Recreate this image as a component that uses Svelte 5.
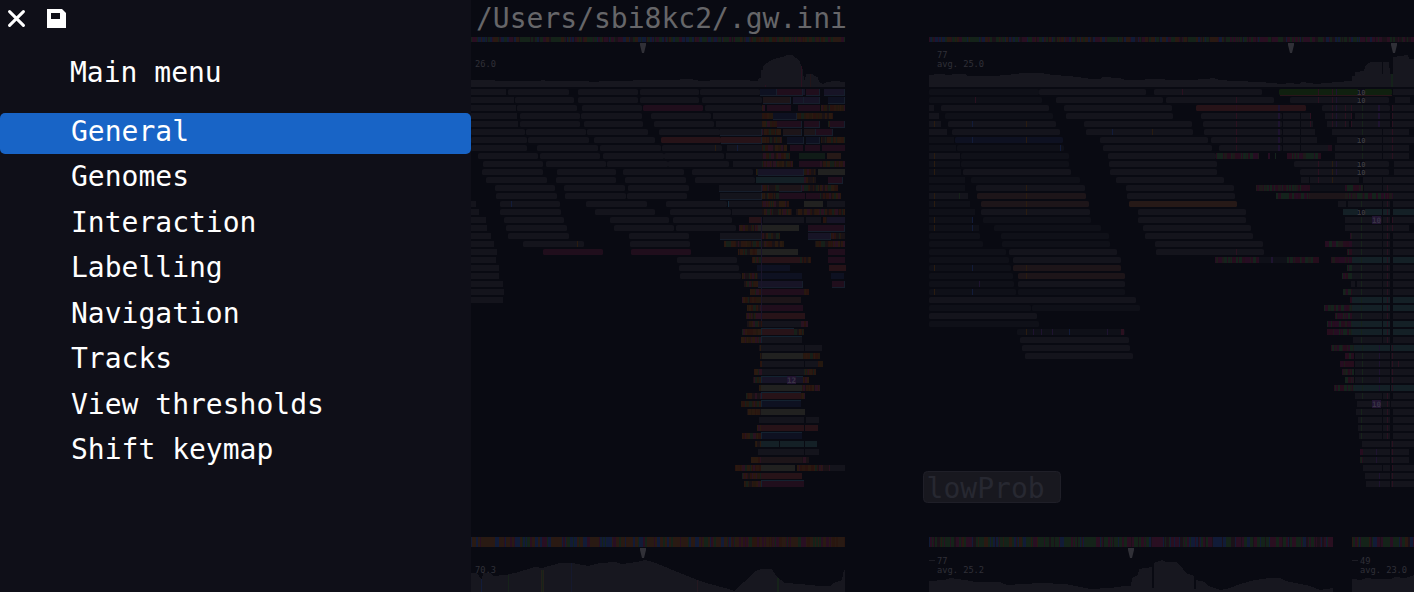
<script>
  const menu = ['General', 'Genomes', 'Interaction', 'Labelling', 'Navigation', 'Tracks', 'View thresholds', 'Shift keymap'];
  let selected = $state('General');

  const top = 89;
  const pitch = 8;

  // Segment kinds: g read, d faint read, s mismatch stripes, q red/green stripes,
  // m magenta, r red, b blue, p purple, o olive, n brown, t teal, f green, u orange
  const colour = {
    g: '#14141c', d: '#0f1018', m: '#200e1c', r: '#271318', b: '#0e1121', p: '#171426',
    o: '#212120', n: '#1d1519', t: '#142026', f: '#10200f', u: '#261917', w: '#101b17'
  };

  // A trailing "_" underlines the segment, a trailing "^" outlines its top.
  const left = `
g471-506 g508-569 g578-638 g640-699 g700-760 b760-777_ m777-803_ p803-805 m806-820_ p824-845_
g471-514 g515-574 g578-638 g640-699 g702-762 n763-791_ p793-804_ p804-820_ b828-845_
g471-516 g517-577 g582-642 m643-703 g705-762 s762-765 m767-791 m798-820 s821-845
g471-517 g520-580 g581-642 g651-711 g713-762 s762-773 b773-797_ s797-833
g471-518 g520-580 g584-643 g654-714 g716-762 s762-777 m777-802_ m804-820_ s828-830 m830-845_
g471-525 g526-586 g587-648 g659-720 g720-762_ s762-781 n783-802_ n804-816_ m816-833_
g471-527 g528-589 g594-655 r661-721 r721-762_ s762-782 b787-804_ b806-820_ s821-845
g471-527 g537-598 g600-661 g662-722 g727-762 s762-787 m790-803 m805-820 m822-845
g478-538 g540-600 g603-664 g664-724 g726-762 s762-790 w799-825 u827-841
g483-543 g546-606 g607-668 g668-729 g733-762 s762-793 m799-820 s820-845
g482-543 g557-616 g623-684 g692-753 s756-758 p758-804_ s804-816 o818-845
g486-547 g556-616 g625-686 g695-755 t756-804 s804-816 m828-843_
g495-555 g564-625 g628-689 g719-762_ s762-779 n779-802_ s802-838
g496-557 g565-626 g627-687 g720-762_ s762-779 m779-805 m806-820 s820-841
g471-476 g500-560 g586-647 g666-727 g728-762 s762-789 o804-823 g827-845
g471-479 g500-561 g595-655 g670-731 g732-762 s762-792 s796-845
g471-486 g504-564 g610-669 g673-732 r749-762 g763-804 g806-821 s823-827 p827-845
g471-487 g506-567 g614-674 g676-736 s739-758 o758-799 m808-845_
g471-491 g508-569 g629-689 g720-762_ s762-780 p808-831_ s831-845
g471-494 g523-584 g630-690 s724-784 s815-845
g471-497 m543-603 m631-691 s738-757 o757-798 m828-845
g471-496 g677-737 s752-762 r762-800 s800-811 m828-845
g471-499 g679-739 b757-790 r829-846
g471-499 g680-741 s742-758 b758-802 b831-844
g471-503 s744-758 p758-803_ m832-845_
g471-504 s750-762 m762-804 s804-809
g471-503 s742-762 n762-801
s747-762 m762-803
s746-762 r762-805
s747-762 g762-801 s801-808
s742-761 r761-794^ s794-804
s741-761 g761-802^
s759-761 g761-804 g805-822
s760-762 o762-803 s803-820
s760-762 g762-804 g805-818 s818-823
s754-762 g762-804 s804-816
s753-761 p761-803^ s803-809
s759-761 o761-802 s802-820
s746-761 r761-801^ s801-805
s741-761 b761-801^
s747-761 o761-805
g759-804 g806-819
s757-761 r761-804 r805-818
s742-761 b761-802^
s755-761 t761-779 t780-804 t805-817
g758-804 g805-819
s751-761 n761-802 s802-809
s735-761 o761-795 s797-830 g830-845
s742-761 r761-802
s744-761 m761-804^`;

  const right = `
d929-1039 g1039-1146 g1154-1262 f1279-1392 g1393-1414
d929-1042 g1056-1163 g1166-1274 g1290-1389 g1395-1410
g929-934 g941-1049 g1064-1172 r1196-1306 g1322-1390 g1393-1414
g929-939 d945-1053 g1066-1173 g1201-1282 g1283-1300 g1301-1311 g1325-1351 g1355-1390 g1393-1414
g929-941 g948-1056 g1084-1192 g1203-1282 g1283-1300 g1301-1313 g1327-1349 g1351-1390 g1393-1414
g929-947 g952-1060 g1086-1193 g1204-1282 g1283-1300 g1301-1315 g1332-1382 g1383-1409
d929-954 b955-1063 g1100-1208 g1211-1282 g1283-1300 g1301-1317 g1337-1382 g1383-1414
d929-956 d957-1064 g1103-1212 g1219-1282 g1283-1300 g1301-1330 m1328-1332 g1335-1382 g1383-1409
g929-960 d961-1069 g1108-1216 q1216-1259 q1268-1270 q1275-1276 q1287-1321 g1335-1382 g1383-1409
d929-960 d961-1069 g1109-1217 g1294-1389 g1394-1414
d929-961 g963-1071 g1110-1217 g1300-1389 g1394-1414
d929-965 d971-1080 g1116-1224 g1301-1309 g1310-1359 g1363-1382 g1383-1414
d929-965 g976-1085 g1126-1234 q1256-1310 d1310-1345 q1345-1363 g1364-1382 g1383-1414
g929-968 n977-1086 g1127-1235 q1276-1310 n1310-1345 q1345-1393 g1393-1414
d929-970 n981-1089 u1129-1237 g1338-1346 g1348-1382 g1383-1390 g1393-1414
d929-975 g981-1090 g1138-1246 t1343-1382 t1383-1390 t1393-1414
d929-972 d983-1091 g1138-1246 g1345-1382 g1383-1390 g1393-1414
d929-979 d994-1101 g1143-1251 g1345-1382 g1383-1409
d929-980 d1001-1109 g1145-1253 q1350-1352 g1352-1382 g1383-1390 g1393-1414
d929-983 d1002-1110 g1155-1263 q1325-1352 g1352-1382 g1383-1390 g1393-1414
d929-1006 g1009-1117 g1156-1264 q1347-1352 g1352-1382 g1383-1390 g1393-1414
d929-1009 g1013-1121 q1215-1259 d1259-1287 q1287-1319 q1331-1352 t1352-1382 t1383-1390 t1393-1414
d929-1011 n1013-1121 q1347-1352 g1352-1382 g1383-1390 g1393-1414
d929-1013 n1018-1125 q1342-1352 g1352-1382 g1383-1390 g1393-1414
d929-1014 g1018-1125 g1351-1355 g1357-1382 g1383-1390 g1393-1414
d929-1016 d1018-1125 q1343-1352 g1352-1382 g1383-1390 g1393-1414
g929-1136 q1350-1352 t1352-1382 t1383-1390 t1393-1414
d929-1031 d1032-1140 q1324-1352 t1352-1382 t1383-1390 t1393-1414
g929-1037 q1335-1352 g1352-1382 g1383-1390 g1393-1414
d929-1039 q1327-1352 t1352-1382 t1383-1390 t1393-1414
d1017-1125 q1327-1352 t1352-1382 t1383-1390 t1393-1414
g1020-1129 g1353-1382 g1383-1390 g1393-1414
g1022-1130 q1331-1354 t1354-1390 t1391-1414
g1025-1133 q1345-1354 g1355-1390 g1391-1414
q1340-1354 g1355-1390 g1391-1414
q1342-1354 g1355-1390 g1391-1414
q1345-1354 g1355-1390 g1391-1414
q1334-1354 t1354-1390 t1391-1414
g1355-1382 g1383-1390 g1393-1414
g1357-1390 g1391-1414
g1356-1382 g1383-1390 g1393-1414
g1358-1382 g1383-1390 g1393-1414
g1358-1382 g1383-1390 g1393-1414
g1359-1382 g1383-1390 g1393-1414
g1362-1390 g1391-1414
q1360-1363 g1363-1390 g1391-1409
q1360-1363 g1363-1390 g1391-1409
g1363-1382 g1383-1390 g1393-1414
g1365-1390 g1391-1414
g1366-1390 g1391-1414`;

  const parse = (text) =>
    text.trim().split('\n').flatMap((line, row) =>
      line.split(' ').map((token) => {
        const [, kind, a, b, edge] = token.match(/^(\w)(\d+)-(\d+)([_^]?)$/);
        return { kind, x: +a, w: b - a, y: top + row * pitch, edge };
      })
    );

  const segments = [...parse(left), ...parse(right)];
  const reads = segments.filter((s) => colour[s.kind]);

  function random(seed) {
    let v = seed;
    return () => ((v = (v * 1664525 + 1013904223) >>> 0) / 4294967296);
  }

  const warm = ['#29130f', '#24180f', '#2a1a10', '#161f19', '#2a1220', '#191216', '#2a1710'];
  const mixed = ['#260d22', '#260d1e', '#14231c', '#14231c', '#1d1a1a', '#260d1c'];
  const bases = ['#290f22', '#142319', '#111b37', '#2a1912', '#1b1119', '#142319'];
  const lower = ['#291a13', '#111b37', '#291a13', '#290f22', '#142319', '#2a1913'];
  const dusk = ['#290f22', '#142319', '#2a0f20', '#142319', '#111b37', '#1b1119'];
  const earth = ['#29160f', '#291a13', '#290f22', '#142319', '#291a13'];

  function stripes(x, w, y, h, palette, seed) {
    const next = random(seed);
    const out = [];
    for (let p = x; p < x + w; ) {
      const step = Math.min(next() < 0.6 ? 1 : 2 + Math.floor(next() * 2), x + w - p);
      out.push({ x: p, w: step, y, h, fill: palette[Math.floor(next() * palette.length)] });
      p += step;
    }
    return out;
  }

  const bands = [
    ...segments.filter((s) => s.kind === 's').flatMap((s) => stripes(s.x, s.w, s.y, 6, warm, s.x * 31 + s.y)),
    ...segments.filter((s) => s.kind === 'q').flatMap((s) => stripes(s.x, s.w, s.y, 6, mixed, s.x * 17 + s.y)),
    ...stripes(471, 280, 37, 5, bases, 7),
    ...stripes(751, 94, 37, 5, earth, 8),
    ...stripes(929, 300, 37, 5, bases, 9),
    ...stripes(1229, 185, 37, 5, dusk, 10),
    ...stripes(471, 260, 537, 10, lower, 11),
    ...stripes(731, 114, 537, 10, earth, 12),
    ...stripes(929, 140, 537, 10, bases, 13),
    ...stripes(1069, 264, 537, 10, dusk, 14),
    ...stripes(1352, 62, 537, 10, bases, 15)
  ];

  const column = (x, from, to, fill, w = 1) =>
    Array.from({ length: to - from + 1 }, (_, i) => ({ x, w, y: top + (from + i) * pitch, h: 6, fill }));

  const violet = '#1e1330';
  const wine = '#2b1120';
  const moss = '#16231a';
  const amber = '#2a1c10';
  const navy = '#121c3a';
  const ticks = [
    ...[4, 8, 9, 10, 13, 14, 16, 17, 22, 25].flatMap((r) => column(934, r, r, amber)),
    ...[4, 6, 12, 13, 14, 15, 22, 23, 30].flatMap((r) => column(1026, r, r, amber)),
    ...[4, 6, 16, 17, 22, 25].flatMap((r) => column(972, r, r, navy)),
    ...column(975, 1, 1, wine), ...column(959, 13, 13, moss), ...column(1060, 7, 7, navy),
    ...column(511, 14, 14, navy), ...column(577, 19, 19, amber), ...column(715, 7, 7, amber),
    ...column(737, 7, 7, navy), ...column(728, 14, 14, '#172b3b'),
    ...column(1182, 0, 0, wine), ...column(1236, 1, 7, wine), ...column(1278, 2, 7, violet, 2),
    ...column(1310, 3, 4, wine), ...column(1318, 0, 1, wine), ...column(1318, 9, 11, wine),
    ...column(1332, 0, 4, wine), ...column(1332, 9, 11, amber), ...column(1336, 0, 4, violet),
    ...column(1336, 9, 10, violet), ...column(1345, 2, 4, wine), ...column(1351, 2, 4, wine),
    ...column(1362, 2, 8, moss), ...column(1378, 2, 4, violet, 2), ...column(1392, 2, 8, wine),
    ...column(1361, 12, 31, moss), ...column(1362, 32, 38, moss), ...column(1361, 40, 43, moss),
    ...column(1387, 12, 31, wine), ...column(1392, 16, 17, wine), ...column(1392, 32, 37, wine),
    ...column(1387, 38, 43, wine), ...column(1392, 44, 49, wine), ...column(1379, 32, 37, violet),
    ...column(1379, 48, 49, violet), ...column(1376, 45, 46, violet), ...column(1398, 34, 34, wine),
    ...column(1033, 30, 30, violet), ...column(1041, 30, 30, violet), ...column(1052, 30, 30, violet),
    ...column(1069, 30, 30, navy), ...column(1107, 30, 30, violet), ...column(1121, 30, 30, wine, 3),
    ...column(1236, 20, 20, wine), ...column(1271, 21, 21, violet, 2), ...column(1112, 5, 5, navy),
    ...column(1152, 5, 5, amber), ...column(979, 24, 24, violet)
  ];

  const coverage = [
    '471,87 471,80 494,80 495,81 540,81 541,80 544,80 545,81 588,81 589,82 608,81 625,81 640,80 670,80 690,79 700,81 720,80 742,80 758,81 759,78 761,78 761,70 763,70 763,66 767,63 772,60 777,58 783,57 787,55 792,55 796,58 800,61 801,66 802,66 803,72 804,80 805,80 806,74 812,74 814,76 818,77 819,82 823,84 827,82 835,81 845,82 845,87',
    '929,87 929,75 938,74 951,75 953,74 965,74 968,76 996,76 1004,75 1018,74 1020,73 1041,73 1053,75 1068,76 1077,77 1091,79 1100,79 1102,77 1119,78 1125,80 1140,80 1150,79 1180,80 1190,80 1205,79 1214,78 1219,80 1235,81 1260,82 1282,84 1289,83 1299,84 1302,82 1316,84 1337,82 1350,81 1352,81 1352,76 1355,76 1355,72 1364,71 1366,65 1371,62 1382,62 1382,74 1383,74 1383,62 1389,62 1390,74 1391,74 1391,83 1393,83 1393,57 1400,56 1408,55 1409,59 1414,59 1414,87',
    '471,592 471,573 477,573 481,579 482,579 483,573 491,573 493,576 505,575 515,573 525,570 535,567 542,568 553,565 560,563 572,563 583,565 588,566 600,563 615,562 622,564 637,562 645,560 653,562 663,566 680,573 690,577 700,581 710,584 725,588 735,591 740,585 748,579 755,571 762,569 772,569 776,576 785,583 800,584 820,586 830,586 833,583 842,580 844,570 845,570 845,592',
    '929,592 929,581 945,580 950,578 965,580 975,582 1000,582 1007,585 1040,583 1065,584 1090,589 1110,588 1125,586 1131,586 1132,578 1138,575 1139,569 1152,567 1152,588 1154,588 1154,563 1162,560 1166,562 1176,562 1180,565 1186,573 1194,576 1194,589 1196,589 1196,580 1205,582 1208,586 1220,590 1230,588 1240,584 1255,580 1270,578 1280,578 1286,581 1300,584 1310,586 1320,590 1333,588 1333,592',
    '1352,592 1352,579 1361,580 1366,578 1375,579 1391,579 1395,577 1405,578 1414,575 1414,592'
  ];

  const accents = [
    { x: 801, y: 66, w: 1, h: 21, fill: '#2b1120' }, { x: 810, y: 74, w: 1, h: 13, fill: '#221519' },
    { x: 765, y: 85, w: 1, h: 2, fill: wine }, { x: 1391, y: 74, w: 2, h: 13, fill: '#14221a' },
    { x: 481, y: 579, w: 1, h: 13, fill: navy }, { x: 508, y: 575, w: 1, h: 17, fill: moss },
    { x: 541, y: 570, w: 3, h: 22, fill: '#24201a' }, { x: 542, y: 570, w: 1, h: 22, fill: moss },
    { x: 571, y: 563, w: 1, h: 29, fill: '#15192e' }, { x: 697, y: 580, w: 1, h: 12, fill: '#241820' },
    { x: 777, y: 578, w: 2, h: 14, fill: moss }, { x: 761, y: 217, w: 1, h: 104, fill: '#1a152a' },
    { x: 929, y: 560, w: 6, h: 1, fill: '#1d1d25' }, { x: 1352, y: 560, w: 6, h: 1, fill: '#1d1d25' }
  ];

  const markers = [[643, 43], [1291, 43], [1394, 43], [643, 548], [1131, 548]];
  const labels = [
    [475, 67, '26.0'], [937, 58, '77'], [937, 67, 'avg. 25.0'], [475, 573, '70.3'],
    [937, 564, '77'], [937, 573, 'avg. 25.2'], [1360, 564, '49'], [1360, 573, 'avg. 23.0']
  ];
  const deletions = [0, 1, 6, 9, 10, 15];
  const insertions = [[787, 36, '12'], [1372, 16, '10'], [1372, 39, '10']];
</script>

<div class="app">
  <aside class="menu">
    <div class="tools">
      <button aria-label="Close">
        <svg width="18" height="18" viewBox="0 0 18 18"><path d="M1.6 1.6 15.4 15.4M15.4 1.6 1.6 15.4" fill="none" stroke="#fff" stroke-width="3" stroke-linecap="round" /></svg>
      </button>
      <button aria-label="Save">
        <svg width="19" height="19" viewBox="0 0 19 19"><path d="M0 0H15L19 4V19H0ZM4 4V10H13V4Z" fill="#fff" fill-rule="evenodd" /></svg>
      </button>
    </div>
    <h1>Main menu</h1>
    <nav>
      {#each menu as item}
        <button class="item" class:active={item === selected} onclick={() => (selected = item)}><span>{item}</span></button>
      {/each}
    </nav>
  </aside>

  <main>
    <header>/Users/sbi8kc2/.gw.ini</header>
    <svg class="tracks" viewBox="471 37 943 555" width="943" height="555">
      <g shape-rendering="crispEdges">
        {#each coverage as points}
          <polygon {points} fill="#17171f" />
        {/each}
      </g>
      {#each reads as s}
        <rect x={s.x} y={s.y} width={s.w} height="6" rx={s.w > 50 ? 1.5 : 0} fill={colour[s.kind]} />
      {/each}
      <g shape-rendering="crispEdges">
        {#each reads as s}
          {#if s.edge === '_'}
            <path d="M{s.x} {s.y + 6.5}H{s.x + s.w - 0.5}V{s.y}" fill="none" stroke="#161e2c" />
          {:else if s.edge === '^'}
            <path d="M{s.x + 0.5} {s.y + 6}V{s.y - 0.5}H{s.x + s.w}" fill="none" stroke="#132230" />
          {/if}
        {/each}
        {#each [...bands, ...ticks, ...accents] as b}
          <rect x={b.x} y={b.y} width={b.w} height={b.h} fill={b.fill} />
        {/each}
        <rect x="1280" y="95" width="112" height="1" fill="#29151a" />
      </g>
      {#each markers as [x, y]}
        <path d="M{x - 3} {y}H{x + 3}V{y + 2}L{x + 1} {y + 10}H{x - 1}L{x - 3} {y + 2}Z" fill="#303037" />
      {/each}
      {#each labels as [x, y, text]}
        <text {x} {y} class="label">{text}</text>
      {/each}
      {#each deletions as row}
        <rect x="1358" y={top + row * pitch} width="7" height="6" fill="#0b0b13" />
        <text x="1357" y={top + 6 + row * pitch} class="count">10</text>
      {/each}
      {#each insertions as [x, row, text]}
        <rect {x} y={top - 1 + row * pitch} width="9" height="8" fill="#211431" />
        <text {x} y={top + 6 + row * pitch} class="insert">{text}</text>
      {/each}
      <rect x="923.5" y="471.5" width="137" height="31" rx="4" fill="#18181f" stroke="#1f1f28" />
      <text x="926.6" y="498" class="hint">lowProb</text>
    </svg>
  </main>
</div>

<style>
  :global(body) { margin: 0; background: #090a12; overflow: hidden; }
  .app { display: grid; grid-template-columns: 471px 943px; width: 1414px; height: 592px; font-family: "DejaVu Sans Mono", monospace; font-size: 28px; }
  .menu { background: #0f0f18; color: #fff; }
  button { border: 0; padding: 0; margin: 0; background: none; font: inherit; color: inherit; display: block; }
  .tools { display: flex; align-items: center; height: 37px; padding-left: 8px; gap: 21px; }
  .tools svg { display: block; }
  h1 { box-sizing: border-box; margin: 0; padding: 18px 0 0 70px; height: 74px; font-size: 28px; font-weight: 400; line-height: 36px; }
  h1, .item { white-space: pre; }
  nav { display: flex; flex-direction: column; gap: 4.5px; padding-top: 2px; }
  .item { box-sizing: border-box; width: 471px; height: 41px; padding-left: 71px; text-align: left; line-height: 36px; border-radius: 5px; }
  .item span { box-sizing: border-box; display: block; height: 41px; padding-top: 0.5px; }
  .active { background: #1864c6; }
  main { background: #090a12; overflow: hidden; }
  header { box-sizing: border-box; height: 37px; padding: 1px 0 0 5px; line-height: 36px; color: #666669; white-space: pre; }
  .tracks { display: block; }
  .label { font-size: 8.7px; fill: #303038; }
  .count { font-size: 7px; font-weight: 700; fill: #3a3a40; }
  .insert { font-size: 7.5px; font-weight: 700; fill: #3a3446; }
  .hint { font-size: 28px; fill: #272831; }
</style>
